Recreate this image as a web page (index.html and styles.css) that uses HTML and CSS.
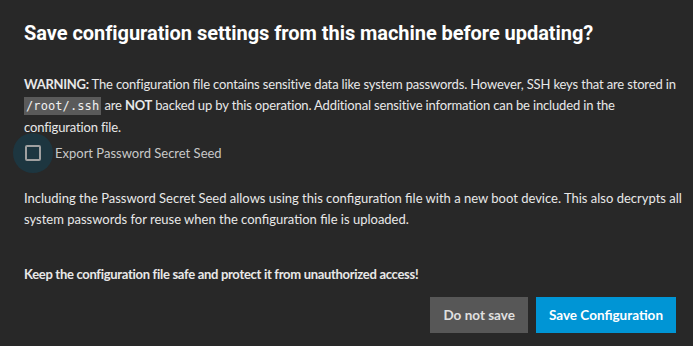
FILE: index.html
```html
<!DOCTYPE html>
<html lang="en">

<head>
  <meta charset="utf-8">
  <title>Save configuration</title>
  <link rel="stylesheet" href="styles.css">
</head>

<body>
  <div class="dialog">
    <h1 class="dialog-title">Save configuration settings from this machine before updating?</h1>
    <div class="dialog-content">
      <p class="warning">
        <strong>WARNING:</strong> The configuration file contains sensitive data like system passwords. However, SSH
        keys that are stored in<br><code>/root/.ssh</code> are <strong>NOT</strong> backed up by this operation.
        Additional sensitive information can be included in the<br>configuration file.
      </p>
      <label class="checkbox">
        <span class="checkbox-ripple"><span class="checkbox-box"></span></span>
        <span class="checkbox-label">Export Password Secret Seed</span>
      </label>
      <p class="info">
        Including the Password Secret Seed allows using this configuration file with a new boot device. This also
        decrypts all<br>system passwords for reuse when the configuration file is uploaded.
      </p>
      <p class="keep-safe">Keep the configuration file safe and protect it from unauthorized access!</p>
    </div>
    <div class="dialog-actions">
      <button class="btn btn-default">Do not save</button>
      <button class="btn btn-primary">Save Configuration</button>
    </div>
  </div>
</body>

</html>
```

FILE: styles.css
```css
html,
body {
  margin: 0;
  padding: 0;
  background-color: #282828;
}

.dialog {
  width: 693px;
  height: 346px;
  box-sizing: border-box;
  padding: 20px 17px 0 24px;
  color: #e8e8e8;
  font-family: Lato, sans-serif;
  font-size: 13px;
}

.dialog-title {
  margin: 0;
  font-family: Roboto, sans-serif;
  font-size: 20px;
  font-weight: 700;
  line-height: 26px;
  color: #ffffff;
  letter-spacing: -0.05px;
}

.dialog-content {
  margin-top: 28px;
  white-space: nowrap;
}

.dialog-content p {
  margin: 0;
  line-height: 21px;
}

.dialog-content strong {
  letter-spacing: -0.3px;
}

.warning {
  letter-spacing: -0.15px;
}

code {
  font-family: "DejaVu Sans Mono", monospace;
  font-size: 12px;
  letter-spacing: 0.1px;
  background-color: #5a5a5a;
  color: #f0f0f0;
  padding: 2px 2px;
}

.checkbox {
  display: flex;
  align-items: center;
  margin: -5px 0 0 -11px;
  height: 40px;
}

.checkbox-ripple {
  width: 40px;
  height: 40px;
  border-radius: 50%;
  background-color: #1d3640;
  display: flex;
  align-items: center;
  justify-content: center;
}

.checkbox-box {
  width: 12px;
  height: 12px;
  border: 2px solid #a0a0a0;
  border-radius: 2px;
}

.checkbox-label {
  margin-left: 2px;
  color: #c8c8c8;
}

.info {
  margin-top: 15px !important;
}

.keep-safe {
  margin-top: 34px !important;
  font-weight: 700;
  letter-spacing: -0.3px;
}

.dialog-actions {
  display: flex;
  justify-content: flex-end;
  gap: 8px;
  margin-top: 12px;
}

.btn {
  border: 0;
  height: 36px;
  padding: 0 13px;
  font-family: Lato, sans-serif;
  font-size: 13.5px;
  font-weight: 700;
  cursor: pointer;
}

.btn-default {
  background-color: #575757;
  color: #e0e0e0;
}

.btn-primary {
  background-color: #0095d5;
  color: #ffffff;
}
```
